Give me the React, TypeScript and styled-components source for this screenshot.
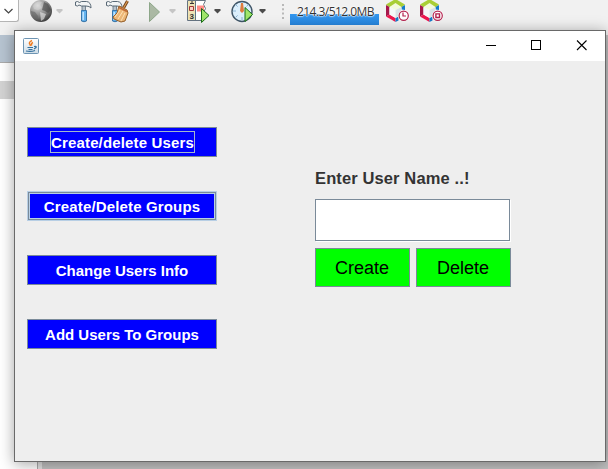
import React from "react";
import styled, { createGlobalStyle } from "styled-components";

const Global = createGlobalStyle`
  html, body { margin: 0; padding: 0; overflow: hidden; }
  * { box-sizing: border-box; }
`;

const Desktop = styled.div`
  position: relative;
  width: 608px;
  height: 469px;
  display: flex;
  flex-direction: column;
  overflow: hidden;
  background: #fff;
  font-family: "Liberation Sans", Arial, sans-serif;
`;

const Toolbar = styled.header`
  height: 35px;
  flex: none;
  display: flex;
  align-items: flex-start;
  background: #f1f1f1;
`;

const Combo = styled.div`
  width: 19px;
  height: 22px;
  margin-right: 11px;
  border: 1px solid #b5b5b5;
  border-top: 0;
  border-left: 0;
  border-radius: 0 0 3px 0;
  background: #fff;
`;

const Tool = styled.div<{ $w: number; $gap?: number }>`
  width: ${(p) => p.$w}px;
  height: 24px;
  flex: none;
  margin-right: ${(p) => p.$gap ?? 0}px;
  svg { display: block; overflow: visible; }
`;

const Memory = styled.div`
  width: 89px;
  height: 25px;
  flex: none;
  margin-right: 7px;
  padding: 2px 0 0 2px;
  background: linear-gradient(#f1f1f1 0 14px, #3397ef 14px, #2784db 25px);
  color: #333;
  font: 12px/20px "Open Sans", "Noto Sans", sans-serif;
  letter-spacing: -0.55px;
  text-align: center;
  white-space: nowrap;
  text-shadow: 0 0 1px #fff, 0 0 1px #fff, 0 0 1px #fff, 0 0 2px #fff, 0 0 2px #fff;
`;

const Workspace = styled.div`
  flex: 1;
  display: flex;
`;

const Tree = styled.aside`
  width: 38px;
  border-right: 1px solid #aaa;
  background: linear-gradient(#b7c4d1 0 27px, #aaa 27px 28px, #fff 28px 46px, #d3d3d3 46px 64px, #fff 64px);
`;

const Editor = styled.div`
  flex: 1;
  border-left: 4px solid #e2e2e2;
  background: #c1c1c1;
`;

const Frame = styled.main`
  position: absolute;
  left: 14px;
  top: 30px;
  width: 592px;
  height: 432px;
  display: flex;
  flex-direction: column;
  border: 1px solid #696969;
  background: #eee;
  box-shadow: 0 2px 14px rgba(0, 0, 0, 0.36);
`;

const TitleBar = styled.div`
  height: 30px;
  flex: none;
  display: flex;
  align-items: center;
  justify-content: space-between;
  padding-left: 8px;
  background: #fff;
  svg { display: block; }
`;

const Content = styled.div`
  flex: 1;
  display: flex;
  align-items: flex-start;
  padding: 66px 0 0 12px;
`;

const Menu = styled.nav`
  display: flex;
  flex-direction: column;
  gap: 34px;
  width: 190px;
  margin-right: 98px;
`;

const MenuButton = styled.button<{ $hover?: boolean; $tracking: number }>`
  height: 30px;
  display: flex;
  align-items: center;
  justify-content: center;
  padding: 0;
  border: 1px solid ${(p) => (p.$hover ? "#b8cfe5" : "#7a8a99")};
  box-shadow: ${(p) => (p.$hover ? "inset 0 0 0 1px #7a8a99, inset 0 0 0 2px #b8cfe5" : "none")};
  background: #00f;
  color: #fff;
  font: bold 15px/20px "Liberation Sans", Arial, sans-serif;
  letter-spacing: ${(p) => p.$tracking}px;
  white-space: nowrap;
`;

const FocusRing = styled.span<{ $on?: boolean }>`
  width: ${(p) => (p.$on ? "145px" : "auto")};
  margin-left: ${(p) => (p.$on ? "1px" : "0")};
  height: 22px;
  padding-top: 1px;
  line-height: 20px;
  border: 1px solid ${(p) => (p.$on ? "#a3b8cc" : "transparent")};
`;

const Form = styled.section`
  width: 196px;
  padding-top: 41px;
`;

const Label = styled.label`
  display: block;
  height: 31px;
  color: #333;
  font: bold 16.5px/20px "Liberation Sans", Arial, sans-serif;
  letter-spacing: 0.12px;
  white-space: nowrap;
`;

const Field = styled.input`
  display: block;
  width: 195px;
  height: 42px;
  padding: 0 4px;
  border: 1px solid #7a8a99;
  border-radius: 0;
  outline: 0;
  background: #fff;
  box-shadow: 1px 1px #fff;
`;

const Actions = styled.div`
  display: flex;
  gap: 6px;
  margin-top: 7px;
`;

const ActionButton = styled.button`
  width: 95px;
  height: 39px;
  padding: 1px 1px 0 0;
  border: 1px solid #7a8a99;
  background: #0f0;
  color: #000;
  font: 18px/20px "Liberation Sans", Arial, sans-serif;
`;

const Arrow = ({ x, muted }: { x: number; muted?: boolean }) => (
  <path d={`M${x - 0.5} 9h6v1.500l-3 3l-3-3z`} fill={muted ? "#c5c5c5" : "#4c4c4c"} />
);

const HammerShape = () => (
  <g>
    <path d="M7 5h3.500v7H7z" fill="#b8c3cc" stroke="#60707e" strokeWidth=".8" />
    <path d="M.500 2l2-.500 2 1 2-1h5Q16 2 16 8l-2-1.500-3-.500H6.500L4 5 2.500 6 .500 5.500z" fill="#f2f4f5" stroke="#596875" />
    <path d="M6.500 10.500h5v10.500q-2.500 1.500-5 0z" fill="#63b3ef" stroke="#3977ac" />
    <path d="M8.200 12v8" stroke="#c4e6ff" strokeWidth="1.500" />
  </g>
);

const PlayShape = ({ x, y, muted }: { x: number; y: number; muted?: boolean }) => (
  <path
    d={muted ? `M${x} ${y}l10 9.500l-10 9.500z` : `M${x} ${y}l7.500 7l-7.500 7z`}
    fill={muted ? "#abb9a4" : "#a0e66a"}
    stroke={muted ? "#8da789" : "#166d16"}
  />
);

const GlobeIcon = () => (
  <svg width="34" height="24">
    <defs>
      <radialGradient id="globe" cx="35%" cy="25%" r="75%">
        <stop offset="0" stopColor="#ddd" />
        <stop offset=".55" stopColor="#929292" />
        <stop offset="1" stopColor="#454545" />
      </radialGradient>
    </defs>
    <circle cx="11" cy="11" r="11" fill="url(#globe)" />
    <path d="M3 6Q7 0 12 2L10 5l2 3-4 2-4-1z" fill="#d8d8d8" opacity=".45" />
    <path d="M14 2l4 2 3 6-3 3-3-2-3-1 1-4z" fill="#444" opacity=".6" />
    <path d="M1 11l4 1 3 4-1 4Q2 18 1 12z" fill="#666" opacity=".6" />
    <path d="M10 12l6 2-2 5-3 2z" fill="#ddd" opacity=".7" />
    <Arrow x={27} muted />
  </svg>
);

const CleanBuildIcon = () => (
  <svg width="24" height="24">
    <HammerShape />
    <path d="M21.500 1l-4 7" stroke="#704018" strokeWidth="3" />
    <path d="M21.500 1l-4 7" stroke="#dc9a54" strokeWidth="1.200" />
    <path d="M13 6l8 4 1 3-3 8-4 1-7-3-1-2 4-4z" fill="#edb878" stroke="#996129" />
    <path d="M9 17l5-7m-2 9l5-8m-2 10l4-8" stroke="#ffe3b8" />
    <path d="M13 7.500l8 4" stroke="#c06a36" strokeWidth="1.500" />
  </svg>
);

const DebugIcon = () => (
  <svg width="34" height="24">
    <path d="M.5.5h18l-2 4 2 4-2 4v8H.5z" fill="#fff" stroke="#667583" />
    <path d="M1 1h7v19H1z" fill="#eee3b5" />
    <path d="M8.500 1v19" stroke="#667583" />
    <path d="M3 3.500h4M5 1v2" stroke="#333" />
    <path d="M2.500 6.500h4v4h-4z" fill="#fbd1c4" stroke="#a33838" />
    <path d="M10 5.500h7v6h-7z" fill="#ff8c86" />
    <text x="2.500" y="18.500" fontSize="8" fontFamily="Liberation Sans" fontWeight="bold" fill="#333">3</text>
    <PlayShape x={14.5} y={8.5} />
    <Arrow x={28} />
  </svg>
);

const ProfileIcon = () => (
  <svg width="36" height="24">
    <circle cx="11" cy="11.500" r="10" fill="#dceffc" stroke="#405668" strokeWidth="1.400" />
    <path d="M11 2v3M2 11h3M4.600 4.600l2 2M17.400 4.600l-2 2M4.600 17.400l2-2M11 20v-3" stroke="#8bb5d4" />
    <path d="M10 3h2l1 8-2 2-2-2z" fill="#df7c3d" />
    <PlayShape x={14} y={7.5} />
    <Arrow x={29} />
  </svg>
);

const CubeIcon = ({ stop }: { stop?: boolean }) => (
  <svg width="24" height="24">
    <path d="M0 5L9.500-1 19 5v11l-9.500 6L0 16z" fill="#fff" />
    <path d="M0 4.500L9.500-1 19 4.500l-3.500 3-6-3.500-6 3.500z" fill="#a9ce36" />
    <path d="M3.500 7l6-4 6 4-6 3z" fill="#f4fadc" />
    <path d="M0 5l3.500 2v7.500L0 16.500z" fill="#a5184b" />
    <path d="M0 16.500l3.500-2 6 3.500v4z" fill="#ed174f" />
    <path d="M15.500 7L19 5v5l-3.500-.500zM9.500 18l3-1.500v4l-3 1.500z" fill="#147bca" />
    <path d="M3.500 7l6 3v8l-6-3.500z" fill="#f4f7f8" />
    <path d="M9.500 10l6-3v7l-6 4z" fill="#d9e3e7" />
    <circle cx="17.700" cy="15.700" r="5.600" fill="#fff" />
    <circle cx="17.700" cy="15.700" r="4.600" fill="#fff" stroke="#b4234f" strokeWidth="1.200" />
    {stop ? (
      <path d="M15.900 13.900h3.600v3.600h-3.600z" fill="#fff" stroke="#b4234f" strokeWidth="1.400" />
    ) : (
      <path d="M17 12.500V16h3" fill="none" stroke="#b4234f" strokeWidth="1.200" />
    )}
  </svg>
);

const JavaIcon = () => (
  <svg width="16" height="16">
    <defs>
      <linearGradient id="java" x2="0" y2="1">
        <stop stopColor="#fff" />
        <stop offset="1" stopColor="#cddce6" />
      </linearGradient>
    </defs>
    <rect x=".5" y=".5" width="15" height="15" rx="1" fill="url(#java)" stroke="#6d94b3" />
    <path d="M9 2.500Q5 4.500 7 6.500L7.500 8M10 4.500Q7.500 5.500 9 7.500" fill="none" stroke="#ef7c22" strokeWidth="1.400" />
    <path d="M4.500 9.500H10M5.500 11.500h4M11 8.500q3-.500 2 1l-2 1.500M3 13q5 1 9-.500" fill="none" stroke="#36719e" strokeWidth="1.200" />
  </svg>
);

const WindowControls = () => (
  <svg width="136" height="30" fill="none" stroke="#000">
    <path d="M17 14.500h10M62.500 9.500h9v9h-9z" shapeRendering="crispEdges" />
    <path d="M108 9.500l9.500 9.500M117.500 9.500L108 19" strokeWidth="1.100" />
  </svg>
);

const menuItems = [
  { text: "Create/delete Users", tracking: 0.15, focused: true },
  { text: "Create/Delete Groups", tracking: 0.15, hovered: true },
  { text: "Change Users Info", tracking: 0 },
  { text: "Add Users To Groups", tracking: 0 },
];

export default function App() {
  return (
    <>
      <Global />
      <Desktop>
        <Toolbar>
          <Combo>
            <svg width="18" height="21"><path d="M4.500 9l4 4 4-4" fill="none" stroke="#444" strokeWidth="1.200" /></svg>
          </Combo>
          <Tool $w={34} $gap={11}><GlobeIcon /></Tool>
          <Tool $w={20} $gap={11}><svg width="20" height="24"><HammerShape /></svg></Tool>
          <Tool $w={24} $gap={19}><CleanBuildIcon /></Tool>
          <Tool $w={28} $gap={10}>
            <svg width="28" height="24"><PlayShape x={0.5} y={2.5} muted /><Arrow x={21} muted /></svg>
          </Tool>
          <Tool $w={34} $gap={10}><DebugIcon /></Tool>
          <Tool $w={36} $gap={15}><ProfileIcon /></Tool>
          <Tool $w={2} $gap={6}>
            <svg width="2" height="24"><path d="M1 4v15" stroke="#b9b9b9" strokeWidth="2" strokeDasharray="2 2.300" /></svg>
          </Tool>
          <Memory>214.3/512.0MB</Memory>
          <Tool $w={24} $gap={10}><CubeIcon /></Tool>
          <Tool $w={24}><CubeIcon stop /></Tool>
        </Toolbar>
        <Workspace>
          <Tree />
          <Editor />
        </Workspace>
        <Frame>
          <TitleBar>
            <JavaIcon />
            <WindowControls />
          </TitleBar>
          <Content>
            <Menu>
              {menuItems.map(({ text, tracking, focused, hovered }) => (
                <MenuButton key={text} $hover={hovered} $tracking={tracking}>
                  <FocusRing $on={focused}>{text}</FocusRing>
                </MenuButton>
              ))}
            </Menu>
            <Form>
              <Label htmlFor="user-name">Enter User Name ..!</Label>
              <Field id="user-name" />
              <Actions>
                <ActionButton>Create</ActionButton>
                <ActionButton>Delete</ActionButton>
              </Actions>
            </Form>
          </Content>
        </Frame>
      </Desktop>
    </>
  );
}
